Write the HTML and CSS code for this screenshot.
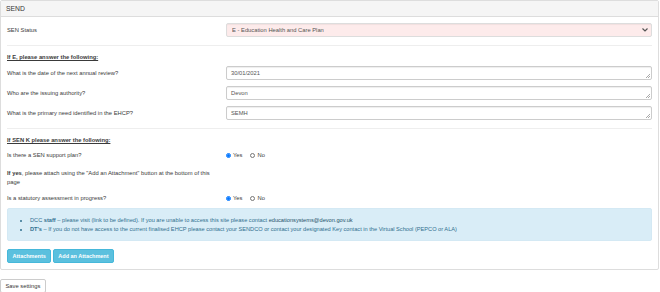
FILE: index.html
```html
<!DOCTYPE html>
<html lang="en">
<head>
    <meta charset="UTF-8">
    <title>SEND</title>
    <link rel="stylesheet" href="styles.css">
</head>
<body>
    <div class="panel">
        <div class="panel-heading">SEND</div>
        <div class="panel-body">
            <div class="form-row">
                <label class="form-label">SEN Status</label>
                <div class="form-field select-wrap">
                    <select class="form-select">
                        <option>E - Education Health and Care Plan</option>
                    </select>
                    <svg class="chevron" width="6" height="4" viewBox="0 0 6 4"><path d="M0.5 0.5 L3 3 L5.5 0.5" fill="none" stroke="#555" stroke-width="1.2"/></svg>
                </div>
            </div>

            <hr class="divider">

            <h4 class="section-title">If E, please answer the following:</h4>

            <div class="form-row input-row">
                <label class="form-label">What is the date of the next annual review?</label>
                <div class="form-field"><textarea class="form-input" rows="1">30/01/2021</textarea></div>
            </div>
            <div class="form-row input-row">
                <label class="form-label">Who are the issuing authority?</label>
                <div class="form-field"><textarea class="form-input" rows="1">Devon</textarea></div>
            </div>
            <div class="form-row input-row">
                <label class="form-label">What is the primary need identified in the EHCP?</label>
                <div class="form-field"><textarea class="form-input" rows="1">SEMH</textarea></div>
            </div>

            <hr class="divider">

            <h4 class="section-title">If SEN K please answer the following:</h4>

            <div class="form-row radio-row">
                <label class="form-label">Is there a SEN support plan?</label>
                <div class="form-field radios">
                    <label class="radio"><input type="radio" name="plan" checked> Yes</label>
                    <label class="radio"><input type="radio" name="plan"> No</label>
                </div>
            </div>

            <p class="attach-note"><strong>If yes</strong>, please attach using the "Add an Attachment" button at the bottom of this page</p>

            <div class="form-row radio-row statutory">
                <label class="form-label">Is a statutory assessment in progress?</label>
                <div class="form-field radios">
                    <label class="radio"><input type="radio" name="statutory" checked> Yes</label>
                    <label class="radio"><input type="radio" name="statutory"> No</label>
                </div>
            </div>

            <div class="alert-info">
                <ul>
                    <li>DCC <strong>staff</strong> – please visit (link to be defined). If you are unable to access this site please contact <a href="#">educationsystems@devon.gov.uk</a></li>
                    <li><strong>DT's</strong> – If you do not have access to the current finalised EHCP please contact your SENDCO or contact your designated Key contact in the Virtual School (PEPCO or ALA)</li>
                </ul>
            </div>

            <div class="btn-row">
                <button class="btn-info">Attachments</button>
                <button class="btn-info">Add an Attachment</button>
            </div>
        </div>
    </div>

    <button class="btn-save">Save settings</button>
</body>
</html>
```

FILE: styles.css
```css
body {
    margin: 0;
    font-family: "Liberation Sans", Arial, sans-serif;
    font-size: 5.8px;
    color: #3a3a3a;
    background: #fff;
}
.panel {
    width: 659px;
    box-sizing: border-box;
    border: 1px solid #ddd;
    border-radius: 2px;
}
.panel-heading {
    height: 15px;
    line-height: 15px;
    padding: 0 5px;
    font-size: 6.8px;
    color: #333;
    background: #f5f5f5;
    border-bottom: 1px solid #ddd;
}
.panel-body {
    padding: 6px 6px 6px 6px;
}
.form-row {
    display: flex;
    align-items: center;
}
.form-label {
    width: 219px;
    flex-shrink: 0;
}
.form-field {
    flex: 1;
}
.select-wrap {
    position: relative;
}
.form-select {
    appearance: none;
    display: block;
    width: 100%;
    height: 14px;
    padding: 0 5px;
    font-family: inherit;
    font-size: 5.8px;
    color: #555;
    background: #fdebeb;
    border: 1px solid #ddd;
    border-radius: 2px;
    box-shadow: inset 0 1px 1px rgba(0,0,0,0.05);
}
.chevron {
    position: absolute;
    right: 4px;
    top: 5px;
}
.divider {
    border: 0;
    border-top: 1px solid #eee;
    margin: 8px 0 7px;
}
.section-title {
    margin: 0;
    font-size: 5.8px;
    line-height: 8px;
    font-weight: bold;
    text-decoration: underline;
}
.input-row {
    margin-top: 6px;
}
.section-title + .input-row {
    margin-top: 5px;
}
.form-input {
    display: block;
    width: 100%;
    box-sizing: border-box;
    height: 14px;
    padding: 3px 4px 0;
    font-family: inherit;
    font-size: 5.8px;
    line-height: 7px;
    color: #555;
    border: 1px solid #ccc;
    border-radius: 2px;
    resize: none;
    overflow: hidden;
    box-shadow: inset 0 1px 1px rgba(0,0,0,0.07);
    background:
        linear-gradient(135deg, transparent 48%, #aaa 48%, #aaa 56%, transparent 56%) right 1px bottom 1px / 4px 4px no-repeat,
        linear-gradient(135deg, transparent 70%, #aaa 70%, #aaa 80%, transparent 80%) right 1px bottom 1px / 4px 4px no-repeat,
        #fff;
}
.radio-row {
    height: 10px;
    margin-top: 6px;
}
.radios {
    display: flex;
    gap: 8px;
}
.radio {
    display: flex;
    align-items: center;
    gap: 2px;
}
.radio input {
    width: 5px;
    height: 5px;
    margin: 0;
}
.attach-note {
    width: 216px;
    margin: 9px 0 0;
    line-height: 8.5px;
}
.statutory {
    margin-top: 7px;
}
.alert-info {
    margin-top: 5px;
    padding: 7px 0;
    background: #d9edf7;
    border: 1px solid #d4e9f4;
    border-radius: 2px;
    color: #31708f;
    font-size: 5.65px;
}
.alert-info ul {
    margin: 0;
    padding-left: 22px;
    line-height: 8.5px;
}
.alert-info a {
    color: #245269;
    text-decoration: none;
}
.btn-row {
    display: flex;
    gap: 1.5px;
    margin-top: 8px;
}
.btn-info {
    height: 14px;
    padding: 0 4.5px;
    font-family: inherit;
    font-size: 5.5px;
    font-weight: bold;
    color: #fff;
    background: #5bc0de;
    border: 1px solid #46b8da;
    border-radius: 2px;
}
.btn-save {
    display: block;
    margin: 9px 0 0 0;
    height: 14px;
    padding: 0 4.5px;
    font-family: inherit;
    font-size: 5.8px;
    color: #333;
    background: #fff;
    border: 1px solid #ccc;
    border-radius: 2px;
}
```
